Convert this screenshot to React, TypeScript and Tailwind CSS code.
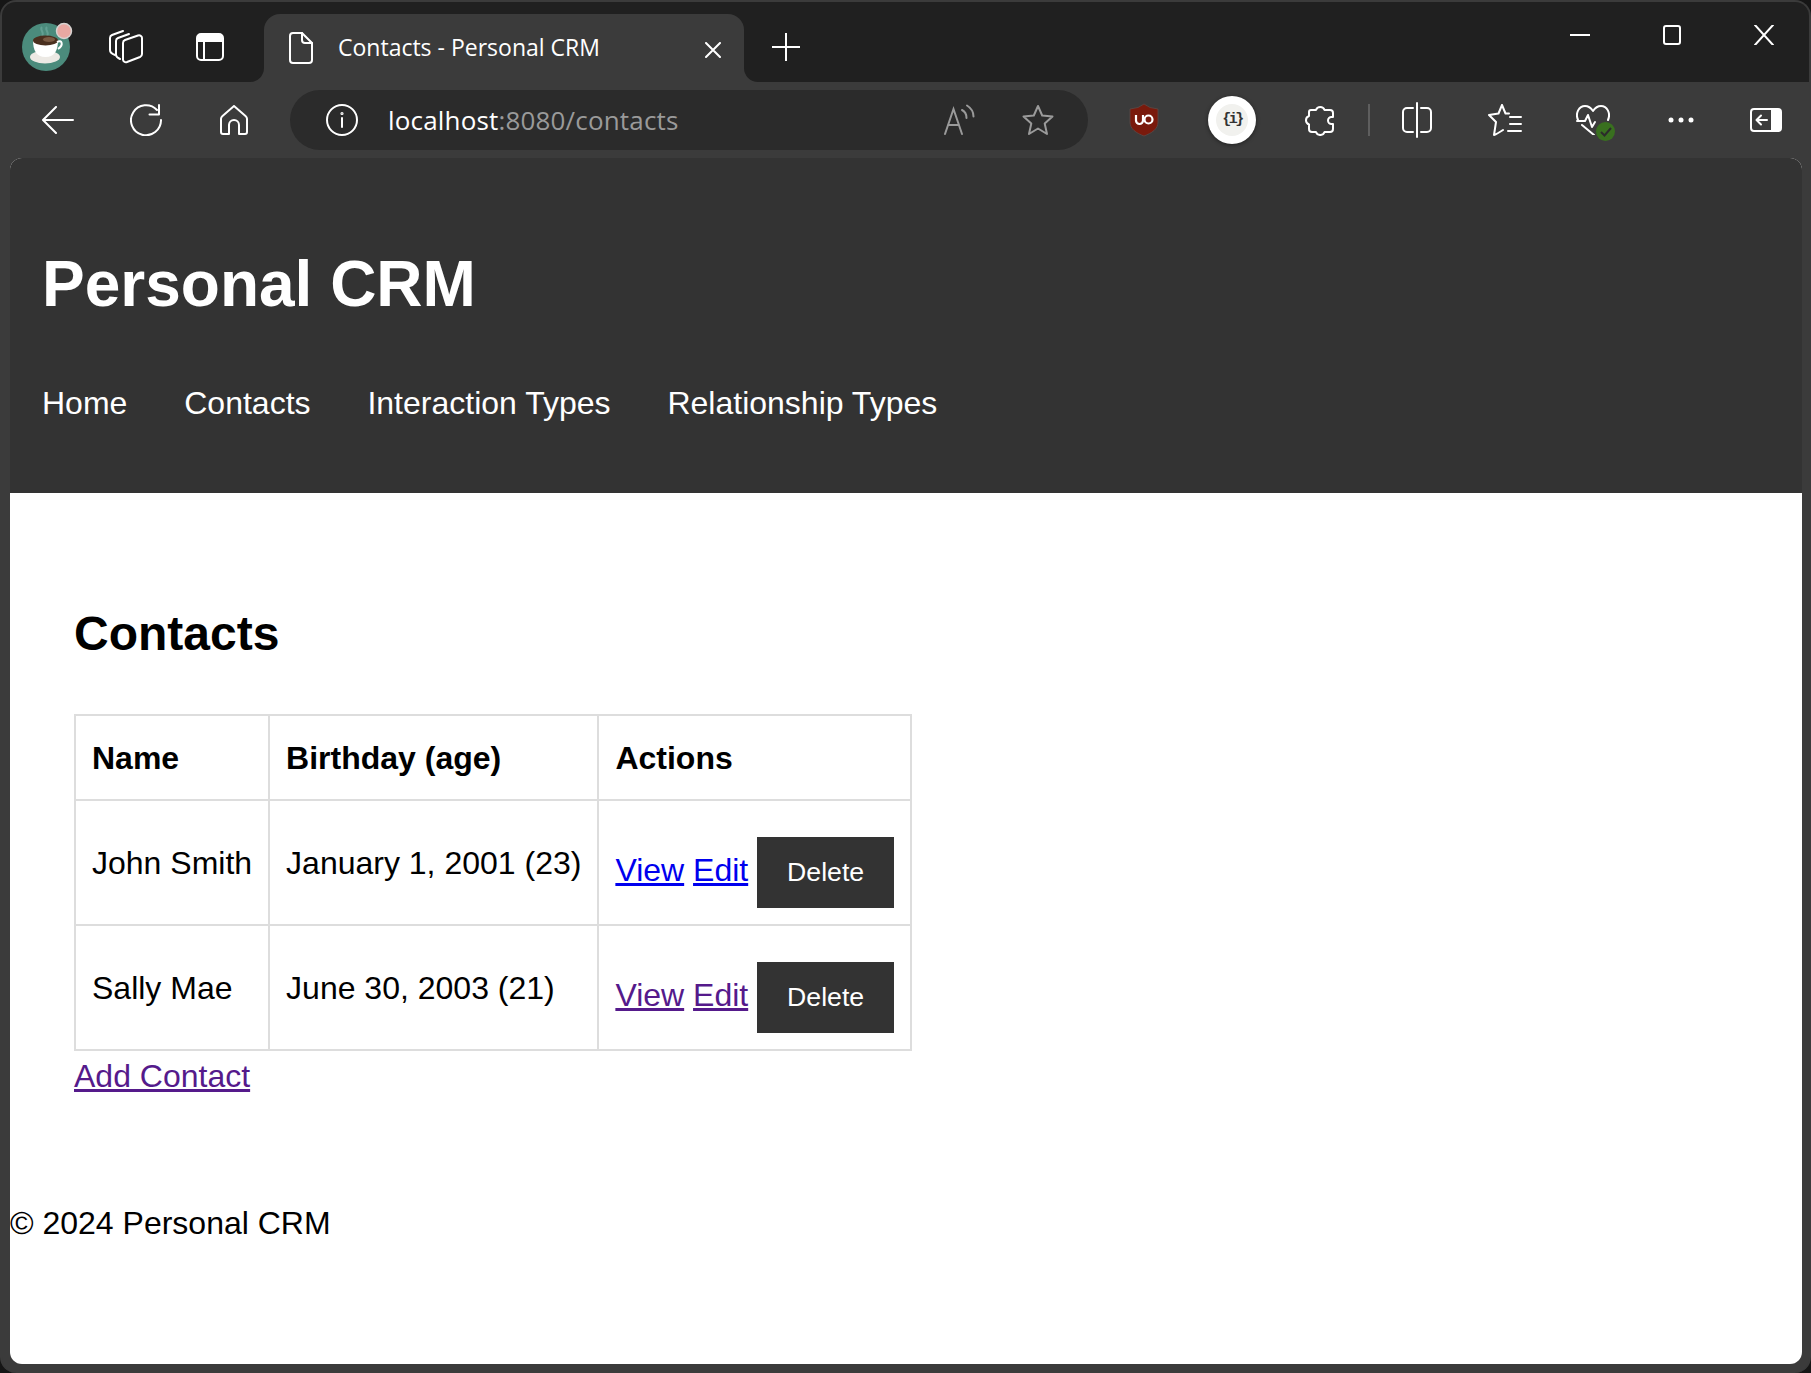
const WHITE = "#ffffff";

function Icon({ w, h, view, children }: { w: number; h: number; view?: string; children: React.ReactNode }) {
  return (
    <svg
      width={w}
      height={h}
      viewBox={view ?? `0 0 ${w} ${h}`}
      fill="none"
      stroke={WHITE}
      strokeWidth={2}
      strokeLinecap="round"
      strokeLinejoin="round"
      aria-hidden
    >
      {children}
    </svg>
  );
}

function CoffeeLogo() {
  return (
    <svg width="56" height="56" viewBox="0 0 56 56" aria-hidden>
      <circle cx="24" cy="28" r="24" fill="#4b8b7c" />
      <path d="M20 8c-3 3 3 5 0 9M25 8c-3 3 3 5 0 9" stroke="#63a093" strokeWidth="2" fill="none" />
      <ellipse cx="23" cy="38" rx="15" ry="6.500" fill="#ece9e4" />
      <path d="M11 21h25c0 10-3 17-12.500 17S11 31 11 21z" fill="#ffffff" />
      <ellipse cx="23.500" cy="21.500" rx="12.500" ry="5" fill="#4a2f1f" />
      <ellipse cx="27" cy="20.500" rx="6" ry="2.500" fill="#7a5a43" />
      <path d="M35 23c5-3 7 3 1 7" stroke="#ffffff" strokeWidth="2" fill="none" />
      <circle cx="42" cy="12" r="7.500" fill="#e8a8a2" stroke="#d7d2d0" strokeWidth="1.500" />
    </svg>
  );
}

function UboShield() {
  return (
    <svg width="30" height="34" viewBox="0 0 30 34" aria-hidden>
      <path d="M15 1l6 3.500 8 1.500v13c0 7-6 11-14 14C7 30 1 26 1 19V6l8-1.500z" fill="#7a1a0c" stroke="#5c4a48" strokeWidth="0.800" />
      <path d="M7 12v5.500a3.500 3.500 0 0 0 7 0V12" stroke="#fff" strokeWidth="2.200" fill="none" />
      <circle cx="19.500" cy="16.500" r="4" stroke="#fff" strokeWidth="2.200" fill="none" />
    </svg>
  );
}

function ChromeButton({ children, className = "w-[88px]" }: { children: React.ReactNode; className?: string }) {
  return <div className={`flex h-full shrink-0 items-center justify-center ${className}`}>{children}</div>;
}

function TabStrip() {
  return (
    <div className="relative flex h-[80px] shrink-0 bg-[#202020]">
      <div className="flex w-[262px] shrink-0 items-center pt-[9px]">
        <div className="ml-[20px] flex w-[60px] justify-start">
          <CoffeeLogo />
        </div>
        <div className="ml-[27px]">
          <svg width="34" height="34" viewBox="0 0 34 34" fill="none" stroke={WHITE} strokeWidth="2" strokeLinecap="round" strokeLinejoin="round" aria-hidden>
            <path d="M6 25c-3-1-5-2-5-5V8c0-1.500.8-2.500 2-3l11-4" />
            <path d="M11 29c-2-1-4-2-4-4V11c0-1.500.8-2.500 2-3l11-4" />
            <path d="M14 13c0-1.500.8-2.500 2-3l13-4.500c2-.6 4 .5 4 2.500v16c0 1.500-.8 2.500-2 3l-13 5c-2 .7-4-.5-4-2.500z" />
          </svg>
        </div>
        <div className="ml-[53px]">
          <svg width="28" height="28" viewBox="0 0 28 28" fill="none" aria-hidden>
            <rect x="1" y="1" width="26" height="26" rx="4" stroke={WHITE} strokeWidth="2" />
            <path d="M1 5a4 4 0 0 1 4-4h18a4 4 0 0 1 4 4v4H1z" fill={WHITE} />
            <path d="M8 9v18" stroke={WHITE} strokeWidth="2" />
          </svg>
        </div>
      </div>

      <div className="relative mt-[12px] flex h-[68px] w-[480px] shrink-0 items-center rounded-t-[16px] bg-[#3b3b3b]">
        <div className="absolute bottom-0 left-[-14px] h-[14px] w-[14px] bg-[#3b3b3b]">
          <div className="h-full w-full rounded-br-[14px] bg-[#202020]" />
        </div>
        <div className="absolute bottom-0 right-[-14px] h-[14px] w-[14px] bg-[#3b3b3b]">
          <div className="h-full w-full rounded-bl-[14px] bg-[#202020]" />
        </div>
        <div className="ml-[25px]">
          <Icon w={24} h={32}>
            <path d="M4 1h9l10 10v17a3 3 0 0 1-3 3H4a3 3 0 0 1-3-3V4a3 3 0 0 1 3-3z" />
            <path d="M13 1v7a3 3 0 0 0 3 3h7" />
          </Icon>
        </div>
        <span className="ml-[25px] mt-[-2px] font-['Open_Sans',sans-serif] text-[23px] leading-none text-white">
          Contacts - Personal CRM
        </span>
        <div className="absolute left-[441px] top-[28px]">
          <Icon w={16} h={16}>
            <path d="M1 1l14 14M15 1L1 15" />
          </Icon>
        </div>
      </div>

      <div className="ml-[28px] mt-[31px] h-[28px]">
        <Icon w={28} h={28}>
          <path d="M14 0v28M0 14h28" />
        </Icon>
      </div>

      <div className="ml-auto mr-[35px] mt-[23px] flex h-[20px] items-start gap-[73px]">
        <Icon w={20} h={20}>
          <path d="M0 10h20" />
        </Icon>
        <Icon w={18} h={20}>
          <rect x="1" y="1" width="16" height="18" rx="2" />
        </Icon>
        <Icon w={20} h={20}>
          <path d="M1 0l18 20M19 0L1 20" />
        </Icon>
      </div>
    </div>
  );
}

function Toolbar() {
  return (
    <div className="flex h-[76px] shrink-0 items-center bg-[#3b3b3b] pl-[12px]">
      <ChromeButton>
        <Icon w={32} h={28}>
          <path d="M31 14H1.500M14 1L1 14l13 13" />
        </Icon>
      </ChromeButton>
      <ChromeButton>
        <Icon w={32} h={32}>
          <path d="M27 6a15 15 0 1 0 4 10" />
          <path d="M29 1v9.500h-9.500" />
        </Icon>
      </ChromeButton>
      <ChromeButton>
        <Icon w={28} h={30}>
          <path d="M2.500 11L14 1l11.500 10c.9.800 1.500 1.500 1.500 2.800V27a2 2 0 0 1-2 2h-6V20a5 5 0 0 0-10 0v9H3a2 2 0 0 1-2-2V13.800C1 12.500 1.600 11.800 2.500 11z" />
        </Icon>
      </ChromeButton>

      <div className="ml-[12px] mr-[12px] flex h-[60px] w-[798px] shrink-0 items-center rounded-full bg-[#2b2b2b] font-['Open_Sans',sans-serif]">
        <div className="ml-[36px]">
          <Icon w={32} h={32}>
            <circle cx="16" cy="16" r="15" />
            <path d="M16 14v9" />
            <circle cx="16" cy="9.500" r="0.600" />
          </Icon>
        </div>
        <span className="ml-[30px] text-[26px] leading-none tracking-[0.17px] text-white">
          localhost<span className="text-[#9a9a9a]">:8080/contacts</span>
        </span>
        <div className="ml-auto mr-[34px] flex items-center gap-[47px]">
          <svg width="32" height="32" viewBox="0 0 32 32" fill="none" stroke="#9a9a9a" strokeWidth="2" strokeLinecap="round" aria-hidden>
            <path d="M2 30L10.500 5 19 30M5 21h11" />
            <path d="M19 6c3 1.500 4.500 4 4.500 8M24 1.500c4 2.500 6.500 6 6.500 11" />
          </svg>
          <svg width="32" height="32" viewBox="0 0 32 32" fill="none" stroke="#9a9a9a" strokeWidth="2" strokeLinejoin="round" aria-hidden>
            <path d="M16 2l4.200 9.500 10.300 1-7.800 7 2.300 10.500L16 24.500 7 30l2.300-10.500-7.800-7 10.300-1z" />
          </svg>
        </div>
      </div>

      <ChromeButton>
        <UboShield />
      </ChromeButton>
      <ChromeButton>
        <div className="flex h-[48px] w-[48px] items-center justify-center rounded-full bg-white shadow-[0_1px_4px_rgba(0,0,0,0.45)]">
          <div className="flex h-[32px] w-[32px] items-center justify-center rounded-full bg-[#f1f1ee] font-['Liberation_Mono',monospace] text-[15px] font-bold tracking-[-2.500px] text-[#333]">
            {"{i}"}
          </div>
        </div>
      </ChromeButton>
      <ChromeButton>
        <Icon w={30} h={32}>
          <path d="M4 8a2 2 0 0 1 2-2h5a4.500 4.500 0 0 1 8.500 0H25a3 3 0 0 1 3 3v4h-1.500a3.500 3.500 0 0 0 0 7H28v5a3 3 0 0 1-3 3h-5.500a4.500 4.500 0 0 1-8.500 0H7a3 3 0 0 1-3-3v-4.500a4.500 4.500 0 0 1 0-8.500z" />
        </Icon>
      </ChromeButton>
      <div className="ml-[4px] mr-[3px] h-[32px] w-[2px] shrink-0 bg-[#5e5e5e]" />
      <ChromeButton>
        <Icon w={30} h={36}>
          <path d="M15 1v34" />
          <path d="M11 6H5a4 4 0 0 0-4 4v16a4 4 0 0 0 4 4h6M19 6h6a4 4 0 0 1 4 4v16a4 4 0 0 1-4 4h-6" />
        </Icon>
      </ChromeButton>
      <ChromeButton>
        <Icon w={34} h={34}>
          <path d="M14 2l3.500 8.500H21M14 2l-3.500 8.500L1 12l7 7-2 13c3-1 6-3 9-5" />
          <path d="M22 14h11M22 21h11M20 28h13" />
        </Icon>
      </ChromeButton>
      <ChromeButton>
        <div className="relative">
          <Icon w={34} h={30}>
            <path d="M2 15C-1 8 3 1 9 1c3 0 6 2 8 5 2-3 5-5 8-5 6 0 10 7 7 14" />
            <path d="M1 16h8l3-6 4 12 3-5" />
            <path d="M6 20l12 10" />
          </Icon>
          <div className="absolute bottom-[-6px] right-[-5px] flex h-[19px] w-[19px] items-center justify-center rounded-full bg-[#39701f]">
            <svg width="12" height="10" viewBox="0 0 12 10" fill="none" stroke="#2b2b2b" strokeWidth="2" aria-hidden>
              <path d="M1 5l3.500 3.500L11 1" />
            </svg>
          </div>
        </div>
      </ChromeButton>
      <ChromeButton>
        <svg width="26" height="6" viewBox="0 0 26 6" fill={WHITE} aria-hidden>
          <circle cx="3" cy="3" r="2.500" />
          <circle cx="13" cy="3" r="2.500" />
          <circle cx="23" cy="3" r="2.500" />
        </svg>
      </ChromeButton>
      <ChromeButton className="w-[82px]">
        <svg width="32" height="24" viewBox="0 0 32 24" fill="none" aria-hidden>
          <rect x="1" y="1" width="30" height="22" rx="3" stroke={WHITE} strokeWidth="2" />
          <path d="M21 1h7a3 3 0 0 1 3 3v16a3 3 0 0 1-3 3h-7z" fill={WHITE} />
          <path d="M17 12H7M11 7.500L6.500 12l4.500 4.500" stroke={WHITE} strokeWidth="2" strokeLinecap="round" strokeLinejoin="round" />
        </svg>
      </ChromeButton>
    </div>
  );
}

const CELL = "border-2 border-[#ddd] p-4 text-left align-middle";
const LINK_BLUE = "text-[#0000ee] underline";
const LINK_VISITED = "text-[#551a8b] underline";

const ROWS = [
  { name: "John Smith", birthday: "January 1, 2001 (23)", linkClass: LINK_BLUE },
  { name: "Sally Mae", birthday: "June 30, 2003 (21)", linkClass: LINK_VISITED },
];

function Page() {
  return (
    <div className="flex min-h-0 flex-1 flex-col overflow-hidden rounded-[12px] bg-white font-['Liberation_Sans',Arial,sans-serif] text-[32px] text-black">
      <header className="h-[335px] shrink-0 bg-[#333] px-[32px] pt-[89px] text-white">
        <h1 className="text-[64px] font-bold leading-[74px]">Personal CRM</h1>
        <nav className="mt-[64px] flex gap-[56.900px] leading-[37px]">
          <a>Home</a>
          <a>Contacts</a>
          <a>Interaction Types</a>
          <a>Relationship Types</a>
        </nav>
      </header>

      <main className="px-[64px] pt-[113px]">
        <h2 className="mb-[53px] text-[48px] font-bold leading-[55px]">Contacts</h2>
        <table className="border-collapse">
          <thead>
            <tr>
              <th className={`${CELL} h-[85px]`}>Name</th>
              <th className={CELL}>Birthday (age)</th>
              <th className={CELL}>Actions</th>
            </tr>
          </thead>
          <tbody>
            {ROWS.map((row) => (
              <tr key={row.name}>
                <td className={CELL}>{row.name}</td>
                <td className={CELL}>{row.birthday}</td>
                <td className={CELL}>
                  <a className={row.linkClass}>View</a> <a className={row.linkClass}>Edit</a>{" "}
                  <button className="mt-[20px] bg-[#333] px-[30px] py-[20px] text-[26.67px] leading-[31px] text-white">
                    Delete
                  </button>
                </td>
              </tr>
            ))}
          </tbody>
        </table>
        <a className="mt-[7px] block w-fit leading-[37px] text-[#551a8b] underline">Add Contact</a>
      </main>

      <footer className="mt-[110px] leading-[37px]">© 2024 Personal CRM</footer>
    </div>
  );
}

export default function App() {
  return (
    <div className="h-screen w-full overflow-hidden bg-[#161616]">
      <div className="flex h-full flex-col overflow-hidden rounded-[16px] border-2 border-b-0 border-[#3b3b3b] bg-[#3b3b3b]">
        <TabStrip />
        <Toolbar />
        <div className="flex min-h-0 flex-1 flex-col pb-[9px] pl-[8px] pr-[7px]">
          <Page />
        </div>
      </div>
    </div>
  );
}
